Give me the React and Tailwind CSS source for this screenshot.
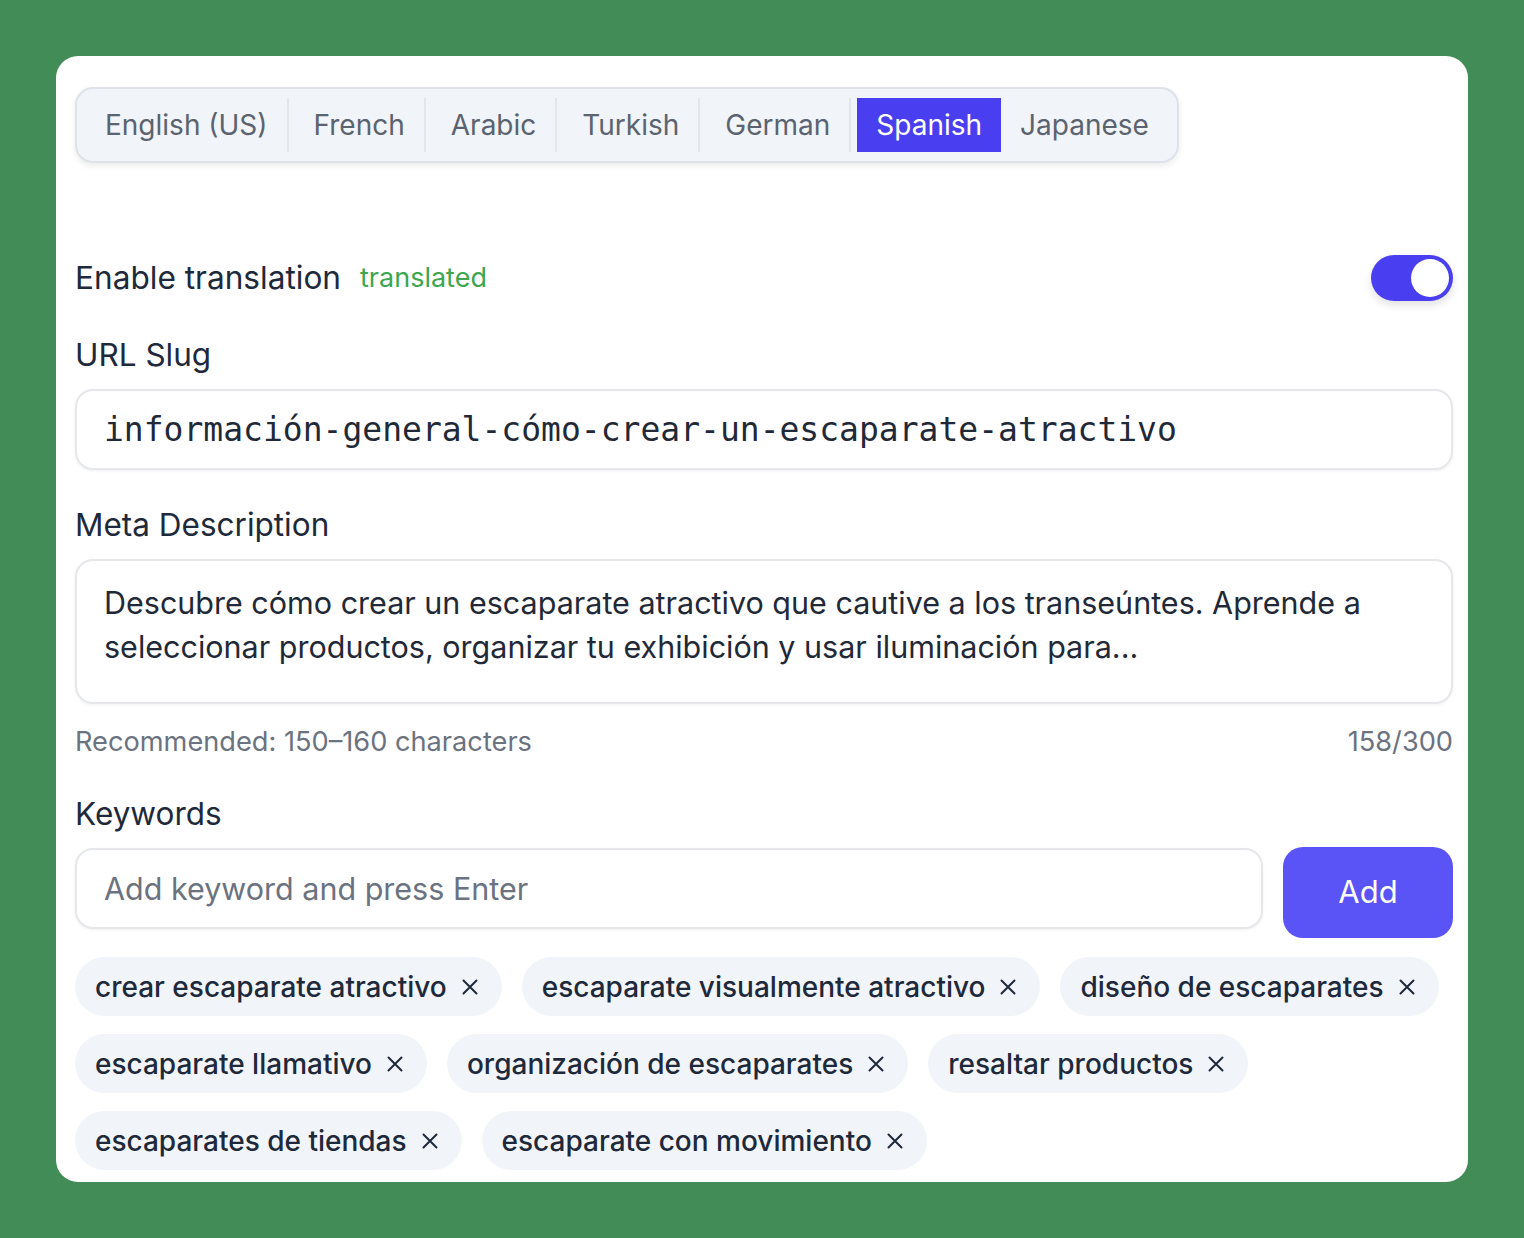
import React, { useState } from 'react';

const languages = ['English (US)', 'French', 'Arabic', 'Turkish', 'German', 'Spanish', 'Japanese'];

const keywords = [
  'crear escaparate atractivo',
  'escaparate visualmente atractivo',
  'diseño de escaparates',
  'escaparate llamativo',
  'organización de escaparates',
  'resaltar productos',
  'escaparates de tiendas',
  'escaparate con movimiento',
];

const CloseIcon = () => (
  <svg width="20" height="20" viewBox="0 0 20 20" fill="none" stroke="currentColor" strokeWidth="2" strokeLinecap="round">
    <path d="M3.5 3.5l13 13M16.5 3.5l-13 13" />
  </svg>
);

const App = () => {
  const [active, setActive] = useState('Spanish');
  const [enabled, setEnabled] = useState(true);

  return (
    <div className="min-h-screen bg-[#428c57] pt-[56px] px-[56px] font-['Inter','Noto_Sans',sans-serif]">
      <div className="w-[1412px] h-[1126px] bg-white rounded-[22px] pt-[31px] pl-[19px] pr-[15px] overflow-hidden">
        {/* Language tabs */}
        <div className="inline-flex items-center p-[9px] bg-[#f1f4f9] border-2 border-[#dfe3e9] rounded-[18px] shadow-[0_3px_6px_rgba(0,0,0,0.08)]">
          {languages.map((lang, i) => {
            const isActive = lang === active;
            const showSep = i < languages.length - 1 && !isActive && languages[i + 1] !== 'Japanese';
            return (
              <React.Fragment key={lang}>
                <button
                  onClick={() => setActive(lang)}
                  className={
                    isActive
                      ? 'h-[54px] px-[19px] bg-[#4a3ff0] text-white text-[28px] leading-none'
                      : 'h-[54px] px-[19px] text-[#5b6370] text-[28px] leading-none'
                  }
                >
                  {lang}
                </button>
                {showSep && <div className="w-[2px] h-[54px] bg-[#e3e7ed] mr-[6px]" />}
              </React.Fragment>
            );
          })}
        </div>

        {/* Enable translation */}
        <div className="mt-[92px] flex items-center justify-between h-[46px]">
          <div className="flex items-center gap-[19px]">
            <span className="text-[31.6px] text-[#1e293b]">Enable translation</span>
            <span className="text-[27px] text-[#3da64e]">translated</span>
          </div>
          <button
            onClick={() => setEnabled(!enabled)}
            className={
              enabled
                ? 'w-[82px] h-[46px] rounded-full bg-[#4a3ff0] p-[4px] flex justify-end shadow-[0_4px_8px_rgba(0,0,0,0.12)]'
                : 'w-[82px] h-[46px] rounded-full bg-[#d1d5db] p-[4px] flex justify-start shadow-[0_4px_8px_rgba(0,0,0,0.12)]'
            }
          >
            <span className="w-[38px] h-[38px] rounded-full bg-white" />
          </button>
        </div>

        {/* URL slug */}
        <div className="mt-[36px] text-[31.5px] leading-[36px] text-[#1e293b]">URL Slug</div>
        <div className="mt-[16px] h-[81px] border-2 border-[#e5e7eb] rounded-[18px] shadow-[0_1px_3px_rgba(0,0,0,0.06)] flex items-center px-[27px]">
          <span className="font-['DejaVu_Sans_Mono',monospace] text-[33px] text-[#1f2937]">
            información-general-cómo-crear-un-escaparate-atractivo
          </span>
        </div>

        {/* Meta description */}
        <div className="mt-[37px] text-[31.5px] leading-[36px] text-[#1e293b]">Meta Description</div>
        <div className="mt-[16px] h-[145px] border-2 border-[#e5e7eb] rounded-[18px] shadow-[0_1px_3px_rgba(0,0,0,0.06)] px-[27px] pt-[20px]">
          <p className="text-[30.5px] leading-[44px] text-[#1f2937]">
            Descubre cómo crear un escaparate atractivo que cautive a los transeúntes. Aprende a seleccionar productos, organizar tu exhibición y usar iluminación para...
          </p>
        </div>
        <div className="mt-[22px] flex justify-between text-[27.2px] leading-[32px] text-[#6b7280]">
          <span>Recommended: 150–160 characters</span>
          <span>158/300</span>
        </div>

        {/* Keywords */}
        <div className="mt-[38px] text-[31.5px] leading-[36px] text-[#1e293b]">Keywords</div>
        <div className="mt-[15px] flex items-start gap-[20px]">
          <div className="flex-1 h-[81px] mt-[1px] border-2 border-[#e5e7eb] rounded-[18px] shadow-[0_1px_3px_rgba(0,0,0,0.06)] flex items-center px-[27px]">
            <span className="text-[30.5px] text-[#6b7280]">Add keyword and press Enter</span>
          </div>
          <button className="w-[170px] h-[91px] rounded-[20px] bg-[#5a54f6] text-white text-[31px]">Add</button>
        </div>

        <div className="mt-[19px] flex flex-wrap gap-x-[20px] gap-y-[18px]">
          {keywords.map((k) => (
            <div key={k} className="h-[59px] rounded-full bg-[#f1f4f9] pl-[20px] pr-[22px] flex items-center gap-[13px] text-[#1e293b]">
              <span className="text-[28px] font-medium">{k}</span>
              <CloseIcon />
            </div>
          ))}
        </div>
      </div>
    </div>
  );
};

export default App;
